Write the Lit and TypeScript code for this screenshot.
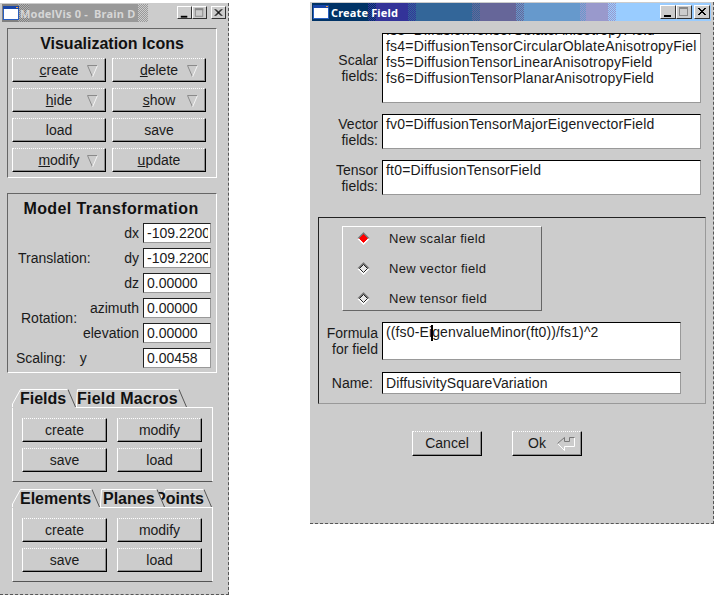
import { LitElement, html, css, svg } from "lit";
import { customElement } from "lit/decorators.js";

type Band = { w: number; a: string; b?: string };

const LEFT_BANDS: Band[] = [
  { w: 16, a: "#808080" },
  { w: 11, a: "#808080", b: "#b0b0b0" },
  { w: 109, a: "#999999" },
  { w: 10, a: "#999999", b: "#cccccc" },
  { w: 80, a: "#cccccc" },
];
const RIGHT_BANDS: Band[] = [
  { w: 56, a: "#003366" },
  { w: 8, a: "#003366", b: "#333399" },
  { w: 32, a: "#333399" },
  { w: 8, a: "#333399", b: "#336699" },
  { w: 56, a: "#336699" },
  { w: 8, a: "#336699", b: "#666699" },
  { w: 36, a: "#666699" },
  { w: 8, a: "#666699", b: "#6699cc" },
  { w: 56, a: "#6699cc" },
  { w: 6, a: "#6699cc", b: "#9999cc" },
  { w: 22, a: "#9999cc" },
  { w: 8, a: "#9999cc", b: "#99ccff" },
  { w: 95, a: "#99ccff" },
];

function bandStyle(b: Band) {
  const bg = b.b
    ? `repeating-conic-gradient(${b.a} 0 25%, ${b.b} 0 50%) 0 0 / 2px 2px`
    : b.a;
  return `width:${b.w}px;background:${bg}`;
}

const winIcon = html`<svg class="icon" width="16" height="14" viewBox="0 0 16 14">
  <rect x="0" y="0" width="16" height="14" fill="#2a5fc0" />
  <rect x="0" y="0" width="16" height="3" fill="#1846a8" />
  <rect x="13" y="1" width="2" height="1" fill="#f0a040" />
  <rect x="1" y="3" width="14" height="10" fill="#fff" />
</svg>`;

const minGlyph = svg`<rect x="3" y="9" width="7" height="2" fill="#000" />`;
const maxGlyph = svg`<rect x="2.5" y="1.5" width="8" height="8" fill="none" stroke="#888" /><rect x="2" y="1" width="9" height="2" fill="#888" />`;
const closeGlyph = svg`<path d="M3 2l7 7M4 2l7 7M10 2l-7 7M11 2l-7 7" stroke="#000" fill="none" />`;

function winBtn(g: unknown) {
  return html`<span class="wb"><svg width="14" height="12" viewBox="0 0 14 12">${g}</svg></span>`;
}

const triangle = html`<svg class="tri" width="11" height="13" viewBox="0 0 11 13">
  <path d="M.5 .5H10.5" stroke="#8a8a8a" fill="none" />
  <path d="M.5 .5L5.5 12" stroke="#8a8a8a" fill="none" />
  <path d="M10.5 .5L5.5 12" stroke="#f4f4f4" fill="none" />
</svg>`;

const returnIcon = html`<svg class="ret" width="18" height="14" viewBox="0 0 18 14">
  <path d="M.5 6.5L7.5 13.5V9.5H17.5V.5" fill="none" stroke="#fff" />
  <path d="M.5 6.5L7.5 .5V4.5H12.5V.5H17.5" fill="none" stroke="#777" />
</svg>`;

function diamond(on: boolean) {
  return html`<svg class="dia" width="13" height="13" viewBox="0 0 13 13">
    <path d="M6.5 0L13 6.5L6.5 13L0 6.5Z" fill="#fff" />
    <path d="M6.5 0L13 6.5H0Z" fill="#777" />
    <path d="M6.5 2.5L10.5 6.5L6.5 10.5L2.5 6.5Z" fill="${on ? "#ff0000" : "#e8e8e8"}" stroke="${on ? "#ff0000" : "#222"}" />
  </svg>`;
}

function tab(label: string, w: number, inset: number, cls: string) {
  const h = 18;
  return html`<div class="tab ${cls}" style="width:${w}px">
    <svg class="tab-edge" width="${w}" height="${h + 1}" viewBox="0 0 ${w} ${h + 1}">
      <path class="tab-fill" d="M0 ${h + 1}L${inset} .5H${w - 8}L${w} ${h + 1}Z" />
      <path d="M.5 ${h}V${h - 3}L${inset + 0.5} .5H${w - 8}" fill="none" stroke="#fff" />
      <path d="M${w - 8} .5L${w - 0.5} ${h}" fill="none" stroke="#555" />
    </svg>
    <span class="tab-text">${label}</span>
  </div>`;
}

@customElement("app-root")
export class AppRoot extends LitElement {
  static styles = css`
    :host {
      display: block;
      position: relative;
      width: 714px;
      height: 595px;
      overflow: hidden;
      background: #fff;
      font-family: "Liberation Sans", Arial, sans-serif;
      font-size: 14px;
      color: #1a1a1a;
    }
    .win {
      position: absolute;
      box-sizing: border-box;
      background: #cccccc;
      border-right: 1px dashed #555;
      border-bottom: 1px dashed #555;
    }
    .win.left { left: 0; top: 3px; width: 229px; height: 592px; padding-top: 1px; }
    .win.right { left: 310px; top: 2px; width: 404px; height: 522px; padding: 1px 0 0 1px; }

    .titlebar {
      position: relative;
      height: 18px;
      margin-left: 2px;
      display: flex;
      align-items: center;
      overflow: hidden;
    }
    .win.right .titlebar { margin-left: 1px; margin-right: 1px; }
    .bands { position: absolute; inset: 0; display: flex; }
    .bands > span { flex: none; height: 100%; }
    .icon { position: relative; flex: none; margin-left: 1px; }
    .ttl {
      position: relative;
      margin-left: 2px;
      font-family: "Noto Sans", sans-serif;
      font-weight: bold;
      font-size: 11px;
      color: #fff;
      white-space: pre;
      letter-spacing: 0.15px;
    }
    .win.left .ttl { color: #d6d6d6; margin-left: 1px; letter-spacing: 0.2px; }
    .wbs { position: absolute; top: 2px; right: 2px; display: flex; }
    .win.left .wbs { right: 2px; }
    .wb {
      box-sizing: border-box;
      width: 16px;
      height: 14px;
      background: #ccc;
      border: 1px solid;
      border-color: #fff #333 #333 #fff;
      display: flex;
      overflow: hidden;
    }
    .wb:nth-child(3) { margin-left: 2px; }
    .win.left .wb { width: 15px; height: 13px; }
    .win.left .wb:nth-child(3) { margin-left: 4px; }

    .group {
      box-sizing: border-box;
      border: 1px solid;
      border-color: #666 #fff #fff #666;
    }
    .g1 { margin: 6px 0 0 7px; width: 210px; height: 150px; padding: 0 0 0 4px; }
    .g2 { margin: 15px 0 0 7px; width: 210px; height: 180px; padding: 0 5px 0 4px; }
    .gt {
      font-size: 16px;
      font-weight: bold;
      text-align: center;
      color: #111;
      height: 29px;
      line-height: 29px;
      white-space: nowrap;
    }
    .g1 .gt { margin-left: -4px; }
    .g2 .gt { line-height: 30px; letter-spacing: 0.4px; margin-left: -1px; }
    .grid { display: grid; grid-template-columns: 94px 94px; column-gap: 6px; row-gap: 6px; }
    .btn {
      position: relative;
      box-sizing: border-box;
      height: 24px;
      background: #ccc;
      border-style: solid;
      border-width: 1px;
      border-color: #fff #000 #000 #fff;
      border-top-style: dotted;
      box-shadow: inset -1px -1px 0 #8c8c8c;
      display: flex;
      align-items: center;
      justify-content: center;
      white-space: nowrap;
    }
    .tri { position: absolute; left: 74px; top: 6px; }

    .tf { display: flex; flex-direction: column; gap: 5px; }
    .sect { display: flex; align-items: center; }
    .sect .side { flex: none; white-space: nowrap; }
    .sect .col { flex: 1; display: flex; flex-direction: column; gap: 5px; }
    .row { display: flex; justify-content: flex-end; align-items: center; gap: 4px; height: 20px; }
    .val {
      box-sizing: border-box;
      width: 68px;
      height: 20px;
      background: #fff;
      border: 1px solid;
      border-color: #222 #999 #999 #222;
      padding: 0 2px 0 3px;
      line-height: 18px;
      overflow: hidden;
      white-space: nowrap;
      flex: none;
    }
    .val > span { display: block; overflow: hidden; }
    .translation .side { margin-left: 6px; }
    .rotation .side { margin-left: 9px; margin-bottom: 6px; }
    .scaling .side { margin-left: 4px; }
    .scaling .y { margin-left: 14px; flex: 1; }

    .tabs { position: relative; margin: 0 0 0 12px; width: 201px; }
    .tabs.first { margin-top: 16px; }
    .tabs.second { margin-top: 7px; }
    .tabrow { position: relative; z-index: 1; display: flex; height: 18px; }
    .tab { position: relative; flex: none; height: 18px; }
    .tab-edge { position: absolute; left: 0; top: 0; }
    .tab-fill { fill: #ccc; }
    .tab-text {
      position: absolute;
      left: 8px;
      top: 1px;
      line-height: 18px;
      font-size: 16px;
      font-weight: bold;
      color: #111;
      white-space: nowrap;
    }
    .tab.sel { z-index: 3; }
    .tab.unsel .tab-fill { fill: none; }
    .tab.unsel .tab-text { left: 1px; letter-spacing: 0.25px; }
    .tab.over { z-index: 2; }
    .tab.over .tab-text { left: 3px; }
    .tab.back { z-index: 1; margin-left: -8px; }
    .tab.back .tab-text { left: -2px; }
    .tab.back .tab-fill, .tab.over .tab-fill { transform: translateY(-1px); }
    .pane {
      box-sizing: border-box;
      height: 75px;
      border: 1px solid;
      border-color: #fff #fff #555 #fff;
      padding: 10px 9px 0 9px;
    }
    .pane .grid { grid-template-columns: 85px 85px; column-gap: 10px; }

    .row2 { display: flex; align-items: center; }
    .lbl { flex: none; width: 67px; text-align: right; line-height: 16px; }
    .box {
      box-sizing: border-box;
      margin-left: 4px;
      width: 319px;
      background: #fff;
      border: 1px solid;
      border-color: #000 #999 #999 #000;
      padding: 0 3px;
      line-height: 16px;
      overflow: hidden;
      white-space: nowrap;
      letter-spacing: 0.2px;
    }
    .scalar { margin-top: 12px; }
    .scalar .box { height: 70px; }
    .scalar .inner { margin-top: -12px; overflow: hidden; }
    .vector { margin-top: 11px; }
    .vector .box, .tensor .box { height: 35px; padding-top: 1px; }
    .vector .box { letter-spacing: 0.15px; }
    .tensor { margin-top: 11px; }

    .g3 {
      box-sizing: border-box;
      margin: 22px 0 0 7px;
      width: 388px;
      height: 187px;
      border: 1px solid;
      border-color: #222 #999 #999 #222;
      padding: 8px 0 0 23px;
    }
    .radios {
      box-sizing: border-box;
      width: 200px;
      height: 85px;
      border: 1px solid;
      border-color: #fff #666 #666 #fff;
      display: flex;
      flex-direction: column;
      gap: 6px;
      padding-left: 14px;
    }
    .radio { display: flex; align-items: center; height: 24px; }
    .dia { flex: none; }
    .radio span { margin-left: 19px; letter-spacing: 0.3px; font-size: 13px; }
    .formula { margin: 11px 0 0 -31px; }
    .formula .box, .name .box { width: 299px; }
    .formula .box { height: 38px; padding-top: 1px; letter-spacing: 0.13px; }
    .caret {
      display: inline-block;
      width: 0;
      height: 16px;
      margin: 0 -1px;
      border-left: 2px solid #000;
      vertical-align: -4px;
    }
    .name { margin: 12px 0 0 -31px; }
    .name .box { height: 22px; line-height: 20px; letter-spacing: 0.1px; }
    .name .lbl { padding-right: 5px; box-sizing: border-box; }

    .actions { display: flex; gap: 30px; margin: 27px 0 0 101px; }
    .actions .btn { width: 70px; height: 25px; padding-bottom: 2px; }
    .ok { padding-right: 20px; }
    .ret { position: absolute; right: 6px; top: 5px; }
  `;

  private tb(bands: Band[], title: string) {
    return html`<div class="titlebar">
      <div class="bands">${bands.map((b) => html`<span style=${bandStyle(b)}></span>`)}</div>
      ${winIcon}
      <span class="ttl">${title}</span>
      <div class="wbs">${winBtn(minGlyph)}${winBtn(maxGlyph)}${winBtn(closeGlyph)}</div>
    </div>`;
  }

  private field(label: string, value: string) {
    return html`<div class="row"><span>${label}</span><div class="val"><span>${value}</span></div></div>`;
  }

  private paneBtns() {
    return html`<div class="grid">
      <div class="btn">create</div><div class="btn">modify</div>
      <div class="btn">save</div><div class="btn">load</div>
    </div>`;
  }

  render() {
    return html`
      <section class="win left">
        ${this.tb(LEFT_BANDS, "ModelVis 0 -  Brain D")}
        <div class="group g1">
          <div class="gt">Visualization Icons</div>
          <div class="grid">
            <div class="btn"><span><u>c</u>reate</span>${triangle}</div>
            <div class="btn"><span><u>d</u>elete</span>${triangle}</div>
            <div class="btn"><span><u>h</u>ide</span>${triangle}</div>
            <div class="btn"><span><u>s</u>how</span>${triangle}</div>
            <div class="btn">load</div>
            <div class="btn">save</div>
            <div class="btn"><span><u>m</u>odify</span>${triangle}</div>
            <div class="btn"><span><u>u</u>pdate</span></div>
          </div>
        </div>
        <div class="group g2">
          <div class="gt">Model Transformation</div>
          <div class="tf">
            <div class="sect translation">
              <span class="side">Translation:</span>
              <div class="col">
                ${this.field("dx", "-109.22000")}
                ${this.field("dy", "-109.22000")}
                ${this.field("dz", "0.00000")}
              </div>
            </div>
            <div class="sect rotation">
              <span class="side">Rotation:</span>
              <div class="col">
                ${this.field("azimuth", "0.00000")}
                ${this.field("elevation", "0.00000")}
              </div>
            </div>
            <div class="sect scaling">
              <span class="side">Scaling:</span>
              <span class="y">y</span>
              <div class="val"><span>0.00458</span></div>
            </div>
          </div>
        </div>
        <div class="tabs first">
          <div class="tabrow">
            ${tab("Fields", 64, 8, "sel")}
            ${tab("Field Macros", 111, 1, "unsel")}
          </div>
          <div class="pane">${this.paneBtns()}</div>
        </div>
        <div class="tabs second">
          <div class="tabrow">
            ${tab("Elements", 88, 8, "sel")}
            ${tab("Planes", 65, 1, "over")}
            ${tab("Points", 55, 8, "back")}
          </div>
          <div class="pane">${this.paneBtns()}</div>
        </div>
      </section>

      <section class="win right">
        ${this.tb(RIGHT_BANDS, "Create Field")}
        <div class="row2 scalar">
          <div class="lbl">Scalar<br />fields:</div>
          <div class="box"><div class="inner">
            fs3=DiffusionTensorOblateAnisotropyField<br />
            fs4=DiffusionTensorCircularOblateAnisotropyField<br />
            fs5=DiffusionTensorLinearAnisotropyField<br />
            fs6=DiffusionTensorPlanarAnisotropyField
          </div></div>
        </div>
        <div class="row2 vector">
          <div class="lbl">Vector<br />fields:</div>
          <div class="box">fv0=DiffusionTensorMajorEigenvectorField</div>
        </div>
        <div class="row2 tensor">
          <div class="lbl">Tensor<br />fields:</div>
          <div class="box">ft0=DiffusionTensorField</div>
        </div>
        <div class="g3">
          <div class="radios">
            <div class="radio">${diamond(true)}<span>New scalar field</span></div>
            <div class="radio">${diamond(false)}<span>New vector field</span></div>
            <div class="radio">${diamond(false)}<span>New tensor field</span></div>
          </div>
          <div class="row2 formula">
            <div class="lbl">Formula<br />for field</div>
            <div class="box">((fs0-Ei<span class="caret"></span>genvalueMinor(ft0))/fs1)^2</div>
          </div>
          <div class="row2 name">
            <div class="lbl">Name:</div>
            <div class="box">DiffusivitySquareVariation</div>
          </div>
        </div>
        <div class="actions">
          <div class="btn">Cancel</div>
          <div class="btn ok">Ok${returnIcon}</div>
        </div>
      </section>
    `;
  }
}
